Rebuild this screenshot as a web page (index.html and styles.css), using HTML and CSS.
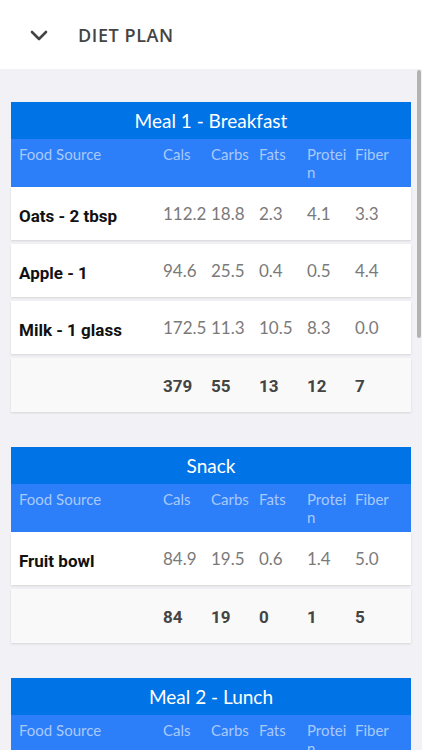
FILE: index.html
```html
<!DOCTYPE html>
<html lang="en">
<head>
    <meta charset="UTF-8">
    <meta name="viewport" content="width=device-width, initial-scale=1.0">
    <title>Diet Plan</title>
    <link rel="stylesheet" href="styles.css">
</head>
<body>
    <div class="topbar">
        <svg class="chevron" width="18" height="11" viewBox="0 0 18 11">
            <path d="M2 2 L9 9 L16 2" fill="none" stroke="#444" stroke-width="2.6" stroke-linecap="round" stroke-linejoin="round"/>
        </svg>
        <span class="page-title">DIET PLAN</span>
    </div>

    <div class="content">
        <div class="scrollbar"></div>

        <div class="meal">
            <div class="meal-title">Meal 1 - Breakfast</div>
            <div class="row head">
                <div class="cell">Food Source</div>
                <div class="cell">Cals</div>
                <div class="cell">Carbs</div>
                <div class="cell">Fats</div>
                <div class="cell">Protein</div>
                <div class="cell">Fiber</div>
            </div>
            <div class="row item">
                <div class="cell name">Oats - 2 tbsp</div>
                <div class="cell">112.2</div>
                <div class="cell">18.8</div>
                <div class="cell">2.3</div>
                <div class="cell">4.1</div>
                <div class="cell">3.3</div>
            </div>
            <div class="row item">
                <div class="cell name">Apple - 1</div>
                <div class="cell">94.6</div>
                <div class="cell">25.5</div>
                <div class="cell">0.4</div>
                <div class="cell">0.5</div>
                <div class="cell">4.4</div>
            </div>
            <div class="row item">
                <div class="cell name">Milk - 1 glass</div>
                <div class="cell">172.5</div>
                <div class="cell">11.3</div>
                <div class="cell">10.5</div>
                <div class="cell">8.3</div>
                <div class="cell">0.0</div>
            </div>
            <div class="row total">
                <div class="cell"></div>
                <div class="cell">379</div>
                <div class="cell">55</div>
                <div class="cell">13</div>
                <div class="cell">12</div>
                <div class="cell">7</div>
            </div>
        </div>

        <div class="meal">
            <div class="meal-title">Snack</div>
            <div class="row head">
                <div class="cell">Food Source</div>
                <div class="cell">Cals</div>
                <div class="cell">Carbs</div>
                <div class="cell">Fats</div>
                <div class="cell">Protein</div>
                <div class="cell">Fiber</div>
            </div>
            <div class="row item">
                <div class="cell name">Fruit bowl</div>
                <div class="cell">84.9</div>
                <div class="cell">19.5</div>
                <div class="cell">0.6</div>
                <div class="cell">1.4</div>
                <div class="cell">5.0</div>
            </div>
            <div class="row total">
                <div class="cell"></div>
                <div class="cell">84</div>
                <div class="cell">19</div>
                <div class="cell">0</div>
                <div class="cell">1</div>
                <div class="cell">5</div>
            </div>
        </div>

        <div class="meal">
            <div class="meal-title">Meal 2 - Lunch</div>
            <div class="row head">
                <div class="cell">Food Source</div>
                <div class="cell">Cals</div>
                <div class="cell">Carbs</div>
                <div class="cell">Fats</div>
                <div class="cell">Protein</div>
                <div class="cell">Fiber</div>
            </div>
        </div>
    </div>
</body>
</html>
```

FILE: styles.css
```css
html, body {
    margin: 0;
    padding: 0;
    height: 100%;
    overflow: hidden;
}

body {
    font-family: Lato, "Noto Sans", sans-serif;
    background-color: #f2f2f6;
    color: #333;
}

.topbar {
    height: 69px;
    background-color: #fff;
    display: flex;
    align-items: center;
}

.chevron {
    margin-left: 30px;
    margin-top: 1px;
}

.page-title {
    margin-left: 30px;
    font-family: "Open Sans", sans-serif;
    font-weight: 600;
    font-size: 18px;
    letter-spacing: 0.6px;
    color: #444;
}

.content {
    position: relative;
    padding: 33px 11px 0 11px;
}

.scrollbar {
    position: absolute;
    right: 1px;
    top: 1px;
    width: 4px;
    height: 268px;
    background-color: #b3b3b3;
    border-radius: 2px;
}

.meal {
    width: 400px;
    margin-bottom: 35px;
}

.meal-title {
    height: 37px;
    line-height: 37px;
    background-color: #0073e6;
    color: #fff;
    text-align: center;
    font-size: 19px;
}

.row {
    display: grid;
    grid-template-columns: 144px repeat(5, 48px);
    align-items: center;
}

.cell {
    padding: 0 0 0 8px;
    white-space: nowrap;
}

.head {
    min-height: 48px;
    align-items: start;
    background-color: #2d7ff9;
    color: #a9c9fb;
    font-size: 15px;
    line-height: 18px;
}

.head .cell {
    padding-top: 6px;
    white-space: normal;
    word-break: break-all;
}

.item {
    height: 53px;
    margin-bottom: 4px;
    background-color: #fff;
    box-shadow: 0 1px 2px rgba(0, 0, 0, 0.12);
    font-size: 17px;
    color: #7a7a7a;
}

.item .name {
    padding-top: 4px;
    font-family: Roboto, sans-serif;
    font-weight: bold;
    color: #111;
}

.total {
    height: 54px;
    background-color: #f9f9f9;
    box-shadow: 0 1px 2px rgba(0, 0, 0, 0.12);
    font-family: Roboto, sans-serif;
    font-weight: bold;
    font-size: 17px;
    color: #444;
}

.total .cell {
    padding-top: 2px;
}
```
